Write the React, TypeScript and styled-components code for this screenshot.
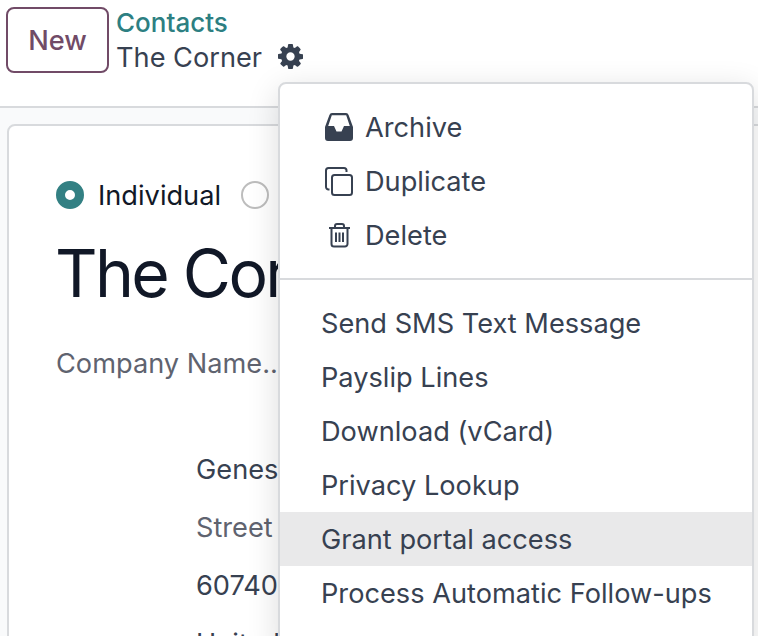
import styled, { createGlobalStyle } from 'styled-components';

const GlobalStyle = createGlobalStyle`
  html, body {
    margin: 0;
    padding: 0;
    height: 100%;
    overflow: hidden;
    background: #f9fafb;
    font-family: Inter, "Noto Sans", sans-serif;
  }
`;

// =============================================
// PAGE
// =============================================

const Page = styled.div`
  position: relative;
  width: 758px;
  height: 636px;
  overflow: hidden;
`;

const Header = styled.header`
  display: flex;
  align-items: flex-start;
  gap: 7px;
  box-sizing: border-box;
  height: 108px;
  padding: 7px 0 0 6px;
  background: #fff;
  border-bottom: 2px solid #d8dadd;
`;

const NewButton = styled.button`
  box-sizing: border-box;
  width: 103px;
  height: 66px;
  padding: 0;
  background: #fff;
  border: 2px solid #714b67;
  border-radius: 8px;
  color: #714b67;
  font: 500 27.2px Inter, sans-serif;
`;

const Breadcrumb = styled.div`
  display: flex;
  flex-direction: column;
`;

const ParentLink = styled.a`
  height: 33px;
  line-height: 32px;
  color: #2d7f82;
  font-size: 26px;
  font-weight: 500;
`;

const CurrentRow = styled.div`
  display: flex;
  align-items: center;
  gap: 16px;
  height: 35px;
  color: #374151;
  font-size: 27.2px;
`;

const Gear = styled.svg`
  width: 25px;
  height: 25px;
  margin-bottom: 2px;
  fill: #374151;
`;

// =============================================
// FORM SHEET
// =============================================

const Sheet = styled.section`
  box-sizing: border-box;
  width: 800px;
  height: 600px;
  margin: 16px 0 0 7px;
  padding: 54px 0 0 47px;
  background: #fff;
  border: 2px solid #d8dadd;
  border-radius: 8px;
`;

const RadioRow = styled.div`
  display: flex;
  align-items: center;
  height: 30px;
`;

const Radio = styled.span<{ $checked?: boolean }>`
  box-sizing: border-box;
  flex: none;
  width: 28px;
  height: 28px;
  border-radius: 50%;
  background: #fff;
  border: ${({ $checked }) => ($checked ? '9px solid #338083' : '2px solid #bdbdbd')};
`;

const RadioLabel = styled.span`
  margin: 0 20px 0 14px;
  color: #111827;
  font-size: 27.2px;
`;

const Title = styled.h1`
  margin: 21px 0 0 -1px;
  color: #111827;
  font-size: 66px;
  font-weight: 400;
  letter-spacing: -2.7px;
  line-height: 84px;
  white-space: nowrap;
`;

const CompanyName = styled.div`
  margin-top: 32px;
  height: 34px;
  line-height: 34px;
  color: #5f636f;
  font-size: 27.2px;
`;

const AddressBlock = styled.div`
  display: flex;
  flex-direction: column;
  gap: 24px;
  margin: 72px 0 0 140px;
`;

const AddressLine = styled.div<{ $placeholder?: boolean }>`
  height: 34px;
  line-height: 34px;
  color: ${({ $placeholder }) => ($placeholder ? '#5f636f' : '#374151')};
  font-size: 27.2px;
  white-space: nowrap;
`;

// =============================================
// DROPDOWN
// =============================================

const Menu = styled.div`
  position: absolute;
  top: 82px;
  left: 278px;
  box-sizing: border-box;
  width: 476px;
  height: 571px;
  padding: 16px 0;
  background: #fff;
  border: 2px solid #d8dadd;
  border-radius: 8px;
  box-shadow: 0 8px 32px rgba(0, 0, 0, 0.14);
`;

const MenuItem = styled.div<{ $active?: boolean; $hasIcon?: boolean }>`
  display: flex;
  align-items: center;
  box-sizing: border-box;
  height: 54px;
  padding-left: ${({ $hasIcon }) => ($hasIcon ? '44px' : '41px')};
  background: ${({ $active }) => ($active ? '#e9e9ea' : 'transparent')};
  color: #374151;
  font-size: 27.2px;
  white-space: nowrap;
`;

const IconSlot = styled.svg`
  flex: none;
  width: 30px;
  height: 30px;
  margin-right: 11px;
`;

const Divider = styled.hr`
  margin: 16px 0;
  border: none;
  border-top: 2px solid #d8dadd;
`;

const ArchiveIcon = () => (
  <IconSlot viewBox="0 0 30 30">
    <path
      d="M8 1H22Q24 1 24.600 3L29 15V26Q29 29 26 29H4Q1 29 1 26V15L5.400 3Q6 1 8 1ZM7.800 3.200L4.200 14H10L12.500 19.500H17.500L20 14H25.800L22.200 3.200Z"
      fill="#374151"
      fillRule="evenodd"
    />
  </IconSlot>
);

const CopyIcon = () => (
  <IconSlot viewBox="0 0 30 30" fill="none" stroke="#374151" strokeWidth="2">
    <path d="M5.500 23.500H4.500A2.500 2.500 0 0 1 2 21V4.500A2.500 2.500 0 0 1 4.500 2H20A2.500 2.500 0 0 1 22.500 4.500V6" />
    <rect x="8" y="9" width="20" height="20" rx="2.500" />
  </IconSlot>
);

const TrashIcon = () => (
  <IconSlot viewBox="0 0 30 30" fill="none" stroke="#374151" strokeWidth="2">
    <path d="M5 8H26M11 8V6a2 2 0 0 1 2-2h5a2 2 0 0 1 2 2V8M7.500 8V24a2.500 2.500 0 0 0 2.500 2.500h11a2.500 2.500 0 0 0 2.500-2.500V8" />
    <path d="M12 12.500V22M15.500 12.500V22M19 12.500V22" />
  </IconSlot>
);

const actions = ['Send SMS Text Message', 'Payslip Lines', 'Download (vCard)', 'Privacy Lookup', 'Grant portal access', 'Process Automatic Follow-ups'];

export default function App() {
  return (
    <Page>
      <GlobalStyle />
      <Header>
        <NewButton>New</NewButton>
        <Breadcrumb>
          <ParentLink>Contacts</ParentLink>
          <CurrentRow>
            The Corner
            <Gear viewBox="128 128 1536 1536">
              <path d="M1152 896q0-106-75-181t-181-75-181 75-75 181 75 181 181 75 181-75 75-181zm512-109v222q0 12-8 23t-20 13l-185 28q-19 54-39 91 35 50 107 138 10 12 10 25t-9 23q-27 37-99 108t-94 71q-12 0-26-9l-138-108q-44 23-91 38-16 136-29 186-7 28-36 28h-222q-14 0-24.500-8.500t-11.500-21.500l-28-184q-49-16-90-37l-141 107q-10 9-25 9-14 0-25-11-126-114-165-168-7-10-7-23 0-12 8-23 15-21 51-66.500t54-70.500q-27-50-41-99l-183-27q-13-2-21-12.500t-8-23.500v-222q0-12 8-23t19-13l186-28q14-46 39-92-40-57-107-138-10-12-10-24 0-10 9-23 26-36 98.500-107.500t94.500-71.500q13 0 26 10l138 107q44-23 91-38 16-136 29-186 7-28 36-28h222q14 0 24.500 8.500t11.500 21.500l28 184q49 16 90 37l142-107q9-9 24-9 13 0 25 10 129 119 165 170 7 8 7 22 0 12-8 23-15 21-51 66.500t-54 70.500q26 50 41 98l183 28q13 2 21 12.500t8 23.500z" />
            </Gear>
          </CurrentRow>
        </Breadcrumb>
      </Header>

      <Sheet>
        <RadioRow>
          <Radio $checked />
          <RadioLabel>Individual</RadioLabel>
          <Radio />
        </RadioRow>
        <Title>The Corner</Title>
        <CompanyName>Company Name...</CompanyName>
        <AddressBlock>
          <AddressLine>Genesis</AddressLine>
          <AddressLine $placeholder>Street 2...</AddressLine>
          <AddressLine>60740</AddressLine>
          <AddressLine>United States</AddressLine>
        </AddressBlock>
      </Sheet>

      <Menu>
        <MenuItem $hasIcon><ArchiveIcon />Archive</MenuItem>
        <MenuItem $hasIcon><CopyIcon />Duplicate</MenuItem>
        <MenuItem $hasIcon><TrashIcon />Delete</MenuItem>
        <Divider />
        {actions.map((label) => (
          <MenuItem key={label} $active={label === 'Grant portal access'}>{label}</MenuItem>
        ))}
      </Menu>
    </Page>
  );
}
